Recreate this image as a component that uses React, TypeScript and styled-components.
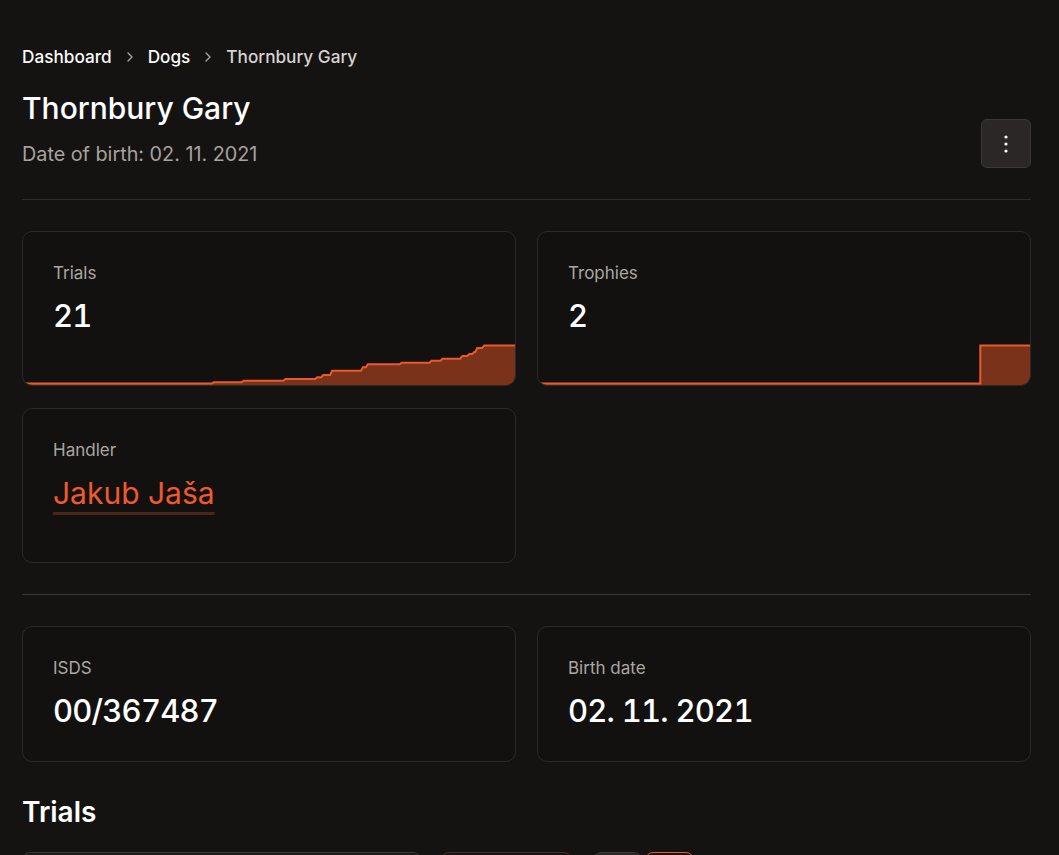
import React from "react";
import styled, { createGlobalStyle } from "styled-components";
import { ChevronRight } from "lucide-react";

const GlobalStyle = createGlobalStyle`
  html, body { margin: 0; padding: 0; background: #141312; }
  body { font-family: Inter, "Noto Sans", sans-serif; color: #fafaf9; overflow: hidden; }
  * { box-sizing: border-box; }
`;

const Page = styled.main`
  padding: 45px 28px 0 22px;
  display: flex;
  flex-direction: column;
  height: 855px;
  overflow: hidden;
`;

const Crumbs = styled.nav`
  display: flex;
  align-items: center;
  gap: 10px;
  height: 24px;
`;

const Crumb = styled.span<{ $current?: boolean }>`
  font-size: 17.2px;
  line-height: 24px;
  font-weight: 500;
  color: ${(p) => (p.$current ? "#d6d3d1" : "#fafaf9")};
`;

const Sep = styled(ChevronRight)`
  color: #a8a29e;
  width: 16px;
  height: 16px;
`;

const Header = styled.header`
  display: flex;
  justify-content: space-between;
  align-items: flex-end;
  margin-top: 21px;
  padding-bottom: 31px;
  border-bottom: 1px solid #2e2b2a;
`;

const TitleBlock = styled.div`
  display: flex;
  flex-direction: column;
  gap: 14px;
`;

const Title = styled.h1`
  margin: 0;
  font-size: 30px;
  line-height: 36px;
  font-weight: 500;
  color: #ffffff;
`;

const Subtitle = styled.p`
  margin: 0;
  font-size: 19.8px;
  line-height: 28px;
  color: #a8a29e;
`;

const MoreButton = styled.button`
  width: 50px;
  height: 49px;
  border-radius: 6px;
  background: #2a2726;
  border: 1px solid #3d3836;
  display: flex;
  align-items: center;
  justify-content: center;
  padding: 0;
`;

const StatsGrid = styled.section`
  display: grid;
  grid-template-columns: 1fr 1fr;
  grid-auto-rows: 155px;
  gap: 22px 21px;
  margin-top: 31px;
`;

const InfoGrid = styled.section`
  display: grid;
  grid-template-columns: 1fr 1fr;
  gap: 22px 21px;
  margin-top: 31px;
`;

const Divider = styled.hr`
  margin: 31px 0 0;
  border: 0;
  border-top: 1px solid #3a3736;
`;

const Card = styled.div`
  position: relative;
  display: flex;
  flex-direction: column;
  background: #121110;
  border: 1px solid #2c2a29;
  border-radius: 10px;
  overflow: hidden;
  padding: 29px 30px 31px;
`;

const Label = styled.div`
  font-size: 17px;
  line-height: 24px;
  color: #aca6a1;
`;

const Value = styled.div`
  margin-top: 12px;
  font-size: 31px;
  line-height: 38px;
  font-weight: 500;
  color: #ffffff;
  letter-spacing: -0.025em;
  font-variant-numeric: tabular-nums;
`;

const LinkValue = styled.a`
  align-self: flex-start;
  margin-top: 12px;
  font-size: 30px;
  line-height: 38px;
  font-weight: 400;
  color: #ee5a2b;
  text-decoration: underline;
  text-decoration-color: #4a2518;
  text-decoration-thickness: 3px;
  text-underline-offset: 8px;
`;

const ChartWrap = styled.div`
  position: absolute;
  left: 0;
  right: 0;
  bottom: 0;
  height: 41px;
`;

const SectionTitle = styled.h2`
  margin: 33px 0 0;
  font-size: 28px;
  line-height: 34px;
  font-weight: 600;
  color: #ffffff;
`;

const Toolbar = styled.div`
  display: flex;
  align-items: flex-start;
  margin-top: 23px;
`;

const Search = styled.div`
  width: 399px;
  height: 38px;
  border-radius: 8px;
  background: #1c1a19;
  border: 1px solid #3a3736;
`;

const Filter = styled.div`
  width: 131px;
  height: 38px;
  margin-left: 20px;
  border-radius: 8px;
  background: #161312;
  border: 1px solid #4a2e25;
`;

const Toggle = styled.div<{ $active?: boolean }>`
  width: 49px;
  height: 38px;
  border-radius: 8px;
  background: ${(p) => (p.$active ? "#1c1210" : "#2a2726")};
  border: 1px solid ${(p) => (p.$active ? "#e8582a" : "#3a3736")};
  margin-left: ${(p) => (p.$active ? "3px" : "21px")};
`;

const trialsPts: [number, number][] = [
  [191, 38.3], [221, 36.7], [263, 35], [295, 33.3], [301, 31], [310, 26.7],
  [341, 23.3], [346, 20.3], [380, 18.7], [410, 16.7], [421, 14.7], [441, 12],
  [448, 10], [453, 8], [456, 4], [463, 1.5],
];

function stepPath(pts: [number, number][], start: number, end: number, slope: number) {
  let d = `M0 ${start}`;
  let prevY = start;
  for (const [x, y] of pts) {
    d += ` L${x - slope} ${prevY} L${x + slope} ${y}`;
    prevY = y;
  }
  d += ` L${end} ${prevY}`;
  return d;
}

function Chart({ pts, slope = 1 }: { pts: [number, number][]; slope?: number }) {
  const w = 495;
  const line = stepPath(pts, 39.5, w, slope);
  const area = `${line} L${w} 41 L0 41 Z`;
  return (
    <ChartWrap>
      <svg width="100%" height="41" viewBox={`0 0 ${w} 41`} preserveAspectRatio="none">
        <path d={area} fill="#7a321a" />
        <path d={line} fill="none" stroke="#ea5a2a" strokeWidth="2" />
      </svg>
    </ChartWrap>
  );
}

function Dots() {
  return (
    <svg width="6" height="20" viewBox="0 0 6 20">
      <circle cx="3" cy="3" r="1.6" fill="#fff" />
      <circle cx="3" cy="10" r="1.6" fill="#fff" />
      <circle cx="3" cy="17" r="1.6" fill="#fff" />
    </svg>
  );
}

export default function App() {
  return (
    <>
      <GlobalStyle />
      <Page>
        <Crumbs>
          <Crumb>Dashboard</Crumb>
          <Sep />
          <Crumb>Dogs</Crumb>
          <Sep />
          <Crumb $current>Thornbury Gary</Crumb>
        </Crumbs>
        <Header>
          <TitleBlock>
            <Title>Thornbury Gary</Title>
            <Subtitle>Date of birth: 02. 11. 2021</Subtitle>
          </TitleBlock>
          <MoreButton aria-label="More actions">
            <Dots />
          </MoreButton>
        </Header>

        <StatsGrid>
          <Card>
            <Label>Trials</Label>
            <Value>21</Value>
            <Chart pts={trialsPts} />
          </Card>
          <Card>
            <Label>Trophies</Label>
            <Value>2</Value>
            <Chart pts={[[445, 1.5]]} slope={0} />
          </Card>
          <Card>
            <Label>Handler</Label>
            <LinkValue href="#">Jakub Jaša</LinkValue>
          </Card>
        </StatsGrid>

        <Divider />

        <InfoGrid>
          <Card>
            <Label>ISDS</Label>
            <Value>00/367487</Value>
          </Card>
          <Card>
            <Label>Birth date</Label>
            <Value>02. 11. 2021</Value>
          </Card>
        </InfoGrid>

        <SectionTitle>Trials</SectionTitle>
        <Toolbar>
          <Search />
          <Filter />
          <Toggle />
          <Toggle $active />
        </Toolbar>
      </Page>
    </>
  );
}
